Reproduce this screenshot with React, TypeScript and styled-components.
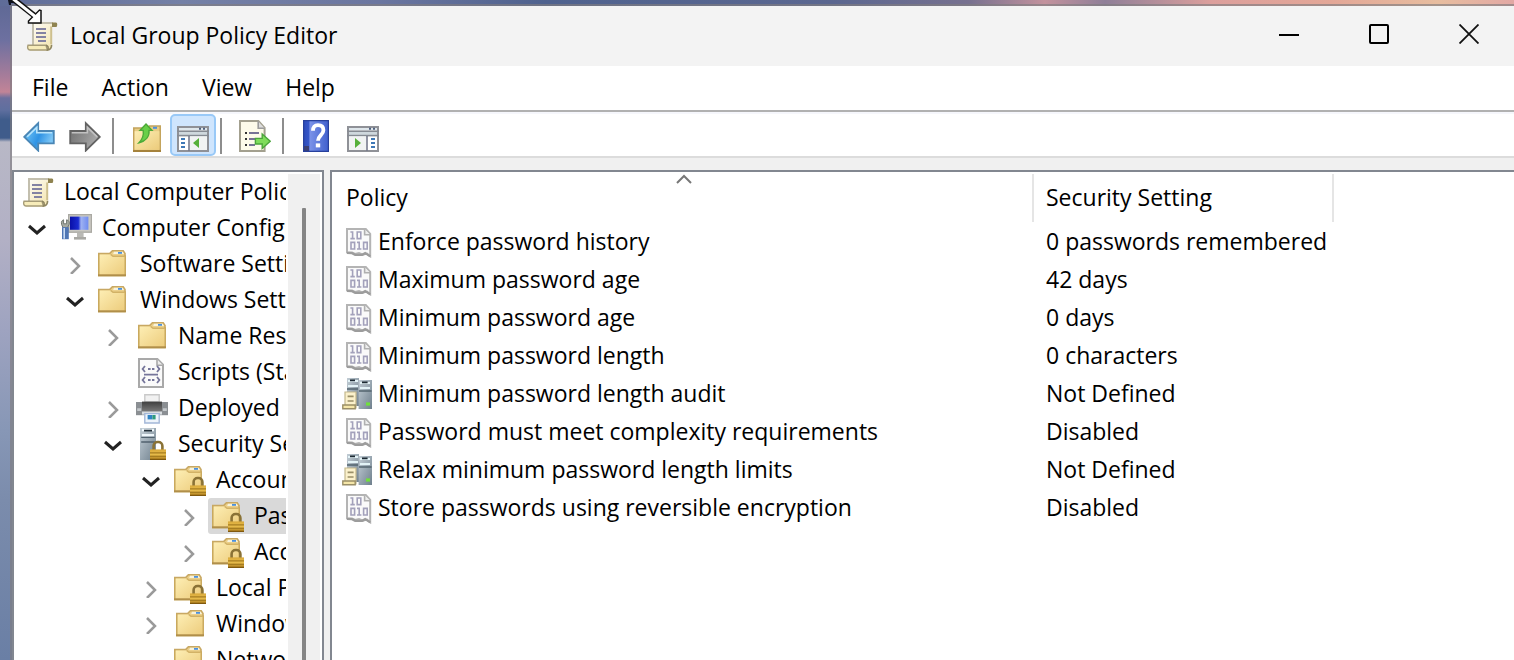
import React, { useState } from "react";
import styled, { createGlobalStyle } from "styled-components";

const GlobalStyle = createGlobalStyle`
  * { box-sizing: border-box; }
  body {
    margin: 0;
    font-family: "Open Sans", "Noto Sans", sans-serif;
    font-size: 23px;
    line-height: 32px;
    color: #000;
  }
  button {
    font: inherit;
    color: inherit;
    border: 0;
    background: transparent;
    padding: 0;
  }
  svg { display: block; flex: none; }
`;

/* ---------- layout ---------- */

const Desktop = styled.div`
  height: 100vh;
  min-height: 320px;
  padding: 4px 0 0 10px;
  overflow: hidden;
  display: flex;
  background:
    linear-gradient(90deg, #5f6c98 0, #7480a6 12%, #6b76a0 25%, #4f628e 36%, #5b6790 55%, #77718f 64%, #c3929d 69%, #8f7f98 73%, #dc9f9c 80%, #e3a797 88%, #e7bd9f 95%, #e2a8a4 100%) 0 0 / 100% 6px no-repeat,
    linear-gradient(180deg, #5d6894 0, #6d70a0 40px, #a57c9a 75px, #c28497 92px, #6c6f9e 98px, #5f6f9f 110px, #3f5c8b 120px, #3f5c8b 138px, #b8b8c6 142px, #b2b0c5 240px, #9ea3c0 330px, #8797b6 430px, #7b8cac 500px, #6a7fa5 660px);
`;

const Window = styled.div`
  flex: 1;
  min-width: 0;
  display: flex;
  flex-direction: column;
  border-style: solid;
  border-width: 2px 0 0 2px;
  border-color: rgba(128, 124, 128, 0.65);
  background: #f0f0f0;
  background-clip: padding-box;
`;

const TitleBar = styled.header`
  flex: none;
  height: 60px;
  display: flex;
  align-items: center;
  gap: 12px;
  padding-left: 14px;
  background: #f3f3f3;
`;

const Title = styled.h1`
  flex: 1;
  margin: 0;
  padding-bottom: 2px;
  font-size: 23px;
  font-weight: 400;
`;

const CaptionButtons = styled.div`
  display: flex;
  align-self: flex-start;
`;

const CaptionButton = styled.button`
  width: 90px;
  height: 56px;
  display: grid;
  place-items: center;
`;

const MenuBar = styled.nav`
  flex: none;
  height: 46px;
  display: flex;
  align-items: center;
  gap: 1px;
  padding: 0 4px 2px;
  background: #fff;
  border-bottom: 2px solid #b1b1b1;
`;

const MenuItem = styled.button`
  padding: 0 16px;
`;

const ToolBar = styled.div`
  flex: none;
  height: 46px;
  display: flex;
  align-items: stretch;
  padding-left: 4px;
  background: #fff;
  border-top: 2px solid #f6f7fc;
  border-bottom: 2px solid #dcdcdc;
`;

const ToolButton = styled.button<{ $active?: boolean }>`
  width: 46px;
  padding: 4px 5px 2px;
  border: 2px solid ${(p) => (p.$active ? "#99c9f7" : "transparent")};
  border-radius: 5px;
  background: ${(p) => (p.$active ? "#cfe5fd" : "transparent")};
`;

const ToolSeparator = styled.span`
  width: 2px;
  height: 36px;
  margin: 4px 10px 0 4px;
  background: #8d8d8d;
`;

const Panes = styled.main`
  flex: 1;
  min-height: 0;
  display: flex;
  gap: 6px;
  padding-top: 12px;
  background: #f0f0f0;
`;

const TreePane = styled.aside`
  flex: none;
  width: 312px;
  display: flex;
  padding: 2px 2px 0 0;
  background: #fff;
  border: 2px solid #828790;
  border-bottom: 0;
`;

const Tree = styled.ul`
  flex: 1;
  min-width: 0;
  margin: 0 2px 0 0;
  padding: 0;
  list-style: none;
  overflow: hidden;
`;

const TreeRow = styled.li<{ $level: number }>`
  height: 36px;
  display: flex;
  align-items: center;
  padding-left: ${(p) => (p.$level === 0 ? 0 : p.$level * 38 - 30)}px;
`;

const Toggle = styled.button`
  width: 30px;
  height: 36px;
  flex: none;
  display: grid;
  place-items: center;
`;

const ToggleSpace = styled.span`
  width: 30px;
  flex: none;
`;

const TreeLabel = styled.button<{ $selected?: boolean }>`
  flex: 1 0 auto;
  height: 36px;
  display: flex;
  align-items: center;
  gap: 10px;
  margin-left: 4px;
  padding-left: 4px;
  border-radius: 3px 0 0 3px;
  white-space: nowrap;
  text-align: left;
  background: ${(p) => (p.$selected ? "#d9d9d9" : "transparent")};
`;

const ItemText = styled.span`
  padding-bottom: 2px;
`;

const ScrollTrack = styled.div`
  flex: none;
  width: 32px;
  padding: 34px 0 0 14px;
  background: #f0f0f0;
`;

const ScrollThumb = styled.div`
  width: 4px;
  height: 100%;
  border-radius: 1px 1px 0 0;
  background: #858585;
`;

const ListPane = styled.section`
  flex: 1;
  min-width: 0;
  overflow: hidden;
  padding-top: 2px;
  background: #fff;
  border: solid #828790;
  border-width: 2px 0 0 2px;
`;

const Table = styled.table`
  width: 100%;
  table-layout: fixed;
  border-collapse: separate;
  border-spacing: 0;
`;

const HeadCell = styled.th<{ $width?: number }>`
  position: relative;
  width: ${(p) => (p.$width ? `${p.$width}px` : "auto")};
  height: 48px;
  padding: 0 0 2px ${(p) => (p.$width === 702 ? 14 : 12)}px;
  border-right: ${(p) => (p.$width ? "2px solid #e5e5e5" : "0")};
  font-weight: 400;
  text-align: left;
`;

const SortMark = styled.span`
  position: absolute;
  top: 0;
  left: 50%;
  margin-left: -6px;
`;

const Gap = styled.tr`
  height: 1px;
`;

const Cell = styled.td`
  height: 38px;
  padding: 0 0 0 12px;
  white-space: nowrap;
`;

const PolicyName = styled.div`
  display: flex;
  align-items: center;
  gap: 4px;
  margin-left: -2px;
`;

const PolicyValue = styled.div`
  padding-bottom: 2px;
`;

/* ---------- icons, drawn on a 16-unit grid ---------- */

const Icon = ({ children, size = 32 }: { children: React.ReactNode; size?: number }) => (
  <svg width={size} height={size} viewBox="0 0 16 16" aria-hidden="true">
    {children}
  </svg>
);

const GradientSheet = styled.svg`
  position: absolute;
`;

const Gradients = () => (
  <GradientSheet width="0" height="0" aria-hidden="true">
    <defs>
      <linearGradient id="gFolder" x1="0" y1="0" x2="1" y2="1">
        <stop offset="0" stopColor="#fdeeb4" />
        <stop offset="1" stopColor="#eccb7b" />
      </linearGradient>
      <linearGradient id="gPaper" x1="0" y1="0" x2="1" y2="1">
        <stop offset="0" stopColor="#ffffff" />
        <stop offset="1" stopColor="#f3e3a8" />
      </linearGradient>
      <linearGradient id="gBlue" x1="0" y1="0" x2="1" y2="0.4">
        <stop offset="0" stopColor="#7fd0fb" />
        <stop offset="0.6" stopColor="#2f93e4" />
        <stop offset="1" stopColor="#7cc6f6" />
      </linearGradient>
      <linearGradient id="gGray" x1="0" y1="0" x2="1" y2="0.4">
        <stop offset="0" stopColor="#6f6f6f" />
        <stop offset="0.6" stopColor="#8f8f8f" />
        <stop offset="1" stopColor="#a9a9a9" />
      </linearGradient>
      <linearGradient id="gHelp" x1="0" y1="0" x2="1" y2="0">
        <stop offset="0" stopColor="#2c49b8" />
        <stop offset="0.22" stopColor="#3556c8" />
        <stop offset="0.27" stopColor="#7a92e8" />
        <stop offset="1" stopColor="#3f5fcd" />
      </linearGradient>
      <linearGradient id="gServer" x1="0" y1="0" x2="1" y2="1">
        <stop offset="0" stopColor="#c3ced6" />
        <stop offset="1" stopColor="#6f808d" />
      </linearGradient>
      <linearGradient id="gScreen" x1="0" y1="0" x2="1" y2="0">
        <stop offset="0" stopColor="#0a10a8" />
        <stop offset="0.45" stopColor="#1a2bd0" />
        <stop offset="0.6" stopColor="#9fb2f2" />
        <stop offset="1" stopColor="#6f8cf0" />
      </linearGradient>
      <linearGradient id="gLock" x1="0" y1="0" x2="0" y2="1">
        <stop offset="0" stopColor="#d9a93a" />
        <stop offset="0.45" stopColor="#e9be4c" />
        <stop offset="1" stopColor="#a9781a" />
      </linearGradient>
      <linearGradient id="gPrinter" x1="0" y1="0" x2="0" y2="1">
        <stop offset="0" stopColor="#3f3f3f" />
        <stop offset="1" stopColor="#777777" />
      </linearGradient>
    </defs>
  </GradientSheet>
);

const ScrollIcon = () => (
  <Icon>
    <path d="M3.5 1.2h9.7c1 0 1.3.8 1.1 2h-1.5v9.3c0 1.6-.6 2.7-1.7 2.7H2c-1 0-1.3-1-.9-2.4h2z" fill="url(#gPaper)" />
    <path d="M3.5 13V1.5h10" fill="none" stroke="#c3bfae" />
    <path d="M12.6 3.2V12" stroke="#cdbf8e" />
    <path d="M13 1.2h2c.8.1.8 1.3.3 2.3H13z" fill="#8f8350" />
    <path d="M1 12.6h9l.7 2.4H2c-1 0-1.5-1-1-2.4z" fill="#f7ecb9" stroke="#a69c78" strokeWidth=".7" />
    <path d="M10 12.6c1 .2 1.4 1.2.8 2.4 1.4-.1 2-1 2-2.6" fill="none" stroke="#8e8560" strokeWidth=".8" />
    <path d="M5 4.5h5M5 6.5h5M5 8.5h5M6 10.5h4" stroke="#8483a3" strokeWidth=".9" />
  </Icon>
);

const Padlock = () => (
  <g>
    <path d="M9.8 11V9c0-1.2.9-2 2-2h.4c1.1 0 2 .8 2 2v2" fill="none" stroke="#8a7236" strokeWidth="1.3" />
    <path d="M8 10.7h8V16H8z" fill="url(#gLock)" />
    <path d="M8 12.4h8M8 14.2h8" stroke="#a67d20" strokeWidth=".6" />
    <path d="M8 15.7h8" stroke="#80590f" strokeWidth=".6" />
  </g>
);

const FolderIcon = ({ inset = 0, locked = false }: { inset?: number; locked?: boolean }) => (
  <Icon>
    <g transform={`translate(${inset} 1)`}>
      <path d="M.4 1.8h5.4L7.2.4h5.4l.9 1.4v11H.4z" fill="#ecd08a" stroke="#c8a863" strokeWidth=".8" />
      <path d="M8 .9h4.4l.6 1.1H7.6z" fill="#f8f3dc" />
      <path d="M10 1h2v.9h-2z" fill="#4b90dd" />
      <path d="M.6 2.3h5.8l1 .7h6.1v9.8H.6z" fill="url(#gFolder)" />
      <path d="M.4 12.8V2M13.6 2.6v10.2" stroke="#c9a95e" strokeWidth=".7" />
      <path d="M6.3 2.2l1.2.9h6" fill="none" stroke="#d2b266" strokeWidth=".7" />
      <path d="M0 12.6h14" stroke="#b08f4a" strokeWidth=".9" />
    </g>
    {locked && <Padlock />}
  </Icon>
);

const ComputerIcon = () => (
  <Icon>
    <path d="M4 1h12v9.4H4z" fill="#c9c8c2" />
    <path d="M4.3 1.3h11.4v8.8H4.3z" fill="none" stroke="#aaa9a3" strokeWidth=".6" />
    <path d="M5 2.3h9.2v6.6H5z" fill="url(#gScreen)" />
    <path d="M8.5 10.4h3.3v2.2H8.5z" fill="#b9b9b5" />
    <path d="M7 12.5h6v1.3H7z" fill="#a8a8a4" />
    <path d="M.8 6.3C.4 4.6 1.3 4 1.8 3.9v2h1.5v-2c1 .2 1.7 1.2 1.2 2.4L3.6 8h-2z" fill="#a5aaa2" stroke="#6f7770" strokeWidth=".5" />
    <path d="M1 7.6h3.4v6H1z" fill="#4f76b4" />
    <path d="M2.1 8v5.4" stroke="#c9dcf5" strokeWidth=".8" />
  </Icon>
);

const ScriptIcon = () => (
  <Icon>
    <path d="M1.5 1.5h9.2l2.8 2.8v11.2h-12z" fill="#fafafa" stroke="#a9a9a9" />
    <path d="M10.5 1.6v3h3" fill="#ececec" stroke="#a9a9a9" strokeWidth=".8" />
    <path d="M4.5 5L3.3 6.5 4.5 8M10.5 5l1.2 1.5L10.5 8M4.5 10.5L3.3 12l1.2 1.5M10.5 10.5l1.2 1.5-1.2 1.5M6 6.5h1.3M8 6.5h1.2M6 12h1.3M8 12h1.2M4 9.3h7" fill="none" stroke="#75759a" strokeWidth=".9" />
  </Icon>
);

const PrinterIcon = () => (
  <Icon>
    <path d="M4.4 1.4h7.2V5H4.4z" fill="#f1f1f1" stroke="#c9c9c9" strokeWidth=".7" />
    <path d="M0 5h16v6.6H0z" fill="#8b8f93" />
    <path d="M3 4.8h10v4.7H3z" fill="url(#gPrinter)" />
    <path d="M.6 8.8h2M13.4 8.8h2" stroke="#c4c8cb" strokeWidth="1.4" />
    <path d="M3 9.8h10v1.5H3z" fill="#d8dcdf" />
    <path d="M4.4 10.8h7.2v4.7H4.4z" fill="#eef4fb" stroke="#a3b7d8" strokeWidth=".7" />
    <path d="M5.8 11.5h2.4v2.2H5.8z" fill="#2f83c4" />
    <path d="M8.2 11.5h1.6v2.2H8.2z" fill="#2f9b7d" />
  </Icon>
);

const ServerLockIcon = () => (
  <Icon>
    <path d="M2 0h8v16H2z" fill="url(#gServer)" />
    <path d="M3 1h6M3 3.6h6" stroke="#eef6fb" strokeWidth="1.3" />
    <path d="M4 1.3h4" stroke="#23303a" strokeWidth=".9" />
    <path d="M2.6 4.7h6.8M2.6 7h6.8" stroke="#51626f" strokeWidth=".7" />
    <g transform="translate(-1 0)"><Padlock /></g>
  </Icon>
);

const BackIcon = () => (
  <Icon>
    <path d="M.6 8.5L7.6 1.6v3.9h7.8v6.2H7.6v3.6z" fill="url(#gBlue)" stroke="#4a86b5" strokeWidth=".9" />
    <path d="M2.1 8.4L6.9 3.7v2.7h7.6" fill="none" stroke="#b7e4fb" strokeWidth=".8" />
  </Icon>
);

const ForwardIcon = () => (
  <Icon>
    <path d="M15.4 8.5L8.4 1.6v3.9H.6v6.2h7.8v3.6z" fill="url(#gGray)" stroke="#626262" strokeWidth=".9" />
    <path d="M1.4 6.4h7.8V3.7l4.9 4.7" fill="none" stroke="#c2c2c2" strokeWidth=".8" />
  </Icon>
);

const UpFolderIcon = () => (
  <Icon>
    <path d="M1.4 4h7l.8-1h5.4v12.5H1.4z" fill="#e9cc84" stroke="#c4a45c" strokeWidth=".8" />
    <path d="M11 3.4h2v1h-2z" fill="#4b90dd" />
    <path d="M1.8 5.6h12.4v9.2H1.8z" fill="url(#gFolder)" />
    <path d="M1 15.5h14" stroke="#a5823c" />
    <path d="M7.5 2l3 3.2H9c.3 3.1-1.7 5.4-5 6.2 1.9-2 2.5-3.7 2.1-6.2H4.5z" fill="#69cf48" stroke="#4caa38" strokeWidth=".7" />
  </Icon>
);

const PaneIcon = ({ mirrored = false }: { mirrored?: boolean }) => (
  <Icon>
    <path d="M.5 3.5h15v12H.5z" fill="#fff" stroke="#8f9197" />
    <path d="M1 4h14v1H1z" fill="#dfe7ec" />
    <path d="M11 4.4h1M13 4.4h1" stroke="#4f607e" />
    <path d="M0 5.6h16" stroke="#868b93" strokeWidth=".8" />
    <path d="M1 6h14v1.5H1z" fill="#cfd8dd" />
    <path d="M0 7.8h16" stroke="#868b93" strokeWidth=".8" />
    {mirrored ? (
      <g>
        <path d="M1 8.2h8.6V15H1z" fill="#f1f3f3" />
        <path d="M10 8v7.5" stroke="#75798c" strokeWidth=".8" />
        <path d="M12 9.5h2M12 11.5h2M12 13.5h2" stroke="#3f78b6" />
        <path d="M4 9v5l3-2.5z" fill="#56b03a" />
      </g>
    ) : (
      <g>
        <path d="M6.4 8.2H15V15H6.4z" fill="#f1f3f3" />
        <path d="M6 8v7.5" stroke="#75798c" strokeWidth=".8" />
        <path d="M2 9.5h2M2 11.5h2M2 13.5h2" stroke="#3f78b6" />
        <path d="M11 9v5l-3-2.5z" fill="#56b03a" />
      </g>
    )}
  </Icon>
);

const ExportIcon = () => (
  <Icon>
    <path d="M.5.5h9.2l3.1 3.4v11.6H.5z" fill="#fdfbea" stroke="#a3a08f" />
    <path d="M9.6.6v3.5h3.2" fill="#ddd" stroke="#9c9c9c" strokeWidth=".8" />
    <path d="M3 6.5h1M3 9.5h1M3 12.5h1" stroke="#333" />
    <path d="M5 6.5h5M5 9.5h3M5 12.5h3" stroke="#777395" />
    <path d="M8.2 9.2h3.4V7l4 3.6-4 3.6V12H8.2z" fill="#7fdc5b" stroke="#4aa53a" strokeWidth=".7" />
  </Icon>
);

const HelpIcon = () => (
  <Icon>
    <path d="M1 0h13v16H1z" fill="url(#gHelp)" />
    <path d="M1 13h3v3H1z" fill="#3b3f72" />
    <path d="M1.3.3h12.4v15.4H1.3z" fill="none" stroke="#27409c" strokeWidth=".6" />
    <path d="M6 5.4c0-1.9.9-2.8 2.5-2.8 1.7 0 2.7.9 2.7 2.5 0 2.4-2.7 2.5-2.7 5.3" fill="none" stroke="#fff" strokeWidth="1.9" />
    <path d="M7.4 11.7h2.2v2H7.4z" fill="#fff" />
  </Icon>
);

const BinaryIcon = () => (
  <Icon>
    <g transform="translate(1 0)">
      <path d="M1.5 1.5h9.4l2.2 2.4v11.2l-1.6-1.3-2 .5-2-.8-2 .5-1.5-.8-2.5-.1z" fill="#fafafa" stroke="#b4b4b4" />
      <path d="M1.5 13.4l2.5.2 1.6.8h3.5l1.5-.9 2.5 1.7" fill="none" stroke="#9c9c9c" strokeWidth="1.1" />
      <path d="M10.3 1.6v2.8h2.8" fill="#eee" stroke="#b0b0b0" strokeWidth=".8" />
      <path d="M3.2 3h1.1v3.3M3.2 6.3h2.2M6.6 3h1.8v3.3H6.600zM3.5 8.2h1.8v3.3H3.5zM6.5 8.2h1.100v3.3M6.5 11.5h2.200M9.8 8.2h1.800v3.300H9.800z" fill="none" stroke="#a3a1bb" strokeWidth=".8" />
    </g>
  </Icon>
);

const ServersIcon = () => (
  <Icon>
    <g transform="translate(1 0)">
      <path d="M1.5 0h6v14h-6z" fill="url(#gServer)" />
      <path d="M7.3 1H14v14.5H7.3z" fill="url(#gServer)" />
      <path d="M2 1.5h5M2 4h5M8 2.5h5M8 5h5" stroke="#e3f3f7" strokeWidth="1.1" />
      <path d="M3 1.2h2.5M9 2.2h2.8" stroke="#1d2a33" strokeWidth=".8" />
      <path d="M1.5 5.5h5.5M7.5 6.5h6.3" stroke="#53646f" strokeWidth=".7" />
      <path d="M11 12.2h2v1.6h-2z" fill="#6fe03c" />
    </g>
    <path d="M1.5 7h5.5v8H1.5z" fill="#fbf1cb" stroke="#c4b88e" strokeWidth=".6" />
    <path d="M.4 13.5h6.2v1.9H.4z" fill="#f5e6a8" stroke="#9a8e66" strokeWidth=".7" />
    <path d="M2.8 9.2h3M2.8 11.5h3" stroke="#9a8f68" strokeWidth=".8" />
  </Icon>
);

const Chevron = ({ open }: { open: boolean }) => (
  <svg width="20" height="20" viewBox="0 0 20 20" fill="none" aria-hidden="true">
    {open ? (
      <path d="M2 8l8 7 8-7" stroke="#222" strokeWidth="3" />
    ) : (
      <path d="M6 5l8 8-8 8" transform="translate(0 -1)" stroke="#9a9a9a" strokeWidth="2.5" />
    )}
  </svg>
);

const ResizePointer = styled.svg`
  position: absolute;
  top: 0;
  left: 6px;
`;

/* ---------- data ---------- */

type TreeNode = { level: number; label: string; icon: React.ReactNode; open?: boolean };

const tree: TreeNode[] = [
  { level: 0, label: "Local Computer Policy", icon: <ScrollIcon /> },
  { level: 1, label: "Computer Configuration", icon: <ComputerIcon />, open: true },
  { level: 2, label: "Software Settings", icon: <FolderIcon />, open: false },
  { level: 2, label: "Windows Settings", icon: <FolderIcon />, open: true },
  { level: 3, label: "Name Resolution Policy", icon: <FolderIcon inset={1} />, open: false },
  { level: 3, label: "Scripts (Startup/Shutdown)", icon: <ScriptIcon /> },
  { level: 3, label: "Deployed Printers", icon: <PrinterIcon />, open: false },
  { level: 3, label: "Security Settings", icon: <ServerLockIcon />, open: true },
  { level: 4, label: "Account Policies", icon: <FolderIcon locked />, open: true },
  { level: 5, label: "Password Policy", icon: <FolderIcon locked />, open: false },
  { level: 5, label: "Account Lockout Policy", icon: <FolderIcon locked />, open: false },
  { level: 4, label: "Local Policies", icon: <FolderIcon locked />, open: false },
  { level: 4, label: "Windows Defender Firewall", icon: <FolderIcon inset={1} />, open: false },
  { level: 4, label: "Network List Manager", icon: <FolderIcon /> },
];

const policies = [
  { name: "Enforce password history", value: "0 passwords remembered" },
  { name: "Maximum password age", value: "42 days" },
  { name: "Minimum password age", value: "0 days" },
  { name: "Minimum password length", value: "0 characters" },
  { name: "Minimum password length audit", value: "Not Defined", servers: true },
  { name: "Password must meet complexity requirements", value: "Disabled" },
  { name: "Relax minimum password length limits", value: "Not Defined", servers: true },
  { name: "Store passwords using reversible encryption", value: "Disabled" },
];

export default function App() {
  const [selected, setSelected] = useState("Password Policy");

  return (
    <Desktop>
      <GlobalStyle />
      <Gradients />
      <Window>
        <TitleBar>
          <ScrollIcon />
          <Title>Local Group Policy Editor</Title>
          <CaptionButtons>
            <CaptionButton aria-label="Minimize">
              <svg width="20" height="20" viewBox="0 0 20 20"><path d="M0 11h20" stroke="#000" strokeWidth="2" /></svg>
            </CaptionButton>
            <CaptionButton aria-label="Maximize">
              <svg width="20" height="20" viewBox="0 0 20 20"><rect x="1" y="1" width="18" height="18" rx="1" fill="none" stroke="#000" strokeWidth="2" /></svg>
            </CaptionButton>
            <CaptionButton aria-label="Close">
              <svg width="20" height="20" viewBox="0 0 20 20"><path d="M.5.5l19 19M19.5.5l-19 19" stroke="#111" strokeWidth="1.8" /></svg>
            </CaptionButton>
          </CaptionButtons>
        </TitleBar>

        <MenuBar aria-label="Menu">
          {["File", "Action", "View", "Help"].map((item) => (
            <MenuItem key={item}>{item}</MenuItem>
          ))}
        </MenuBar>

        <ToolBar role="toolbar" aria-label="Tools">
          <ToolButton aria-label="Back"><BackIcon /></ToolButton>
          <ToolButton aria-label="Forward"><ForwardIcon /></ToolButton>
          <ToolSeparator />
          <ToolButton aria-label="Up one level"><UpFolderIcon /></ToolButton>
          <ToolButton $active aria-pressed="true" aria-label="Show or hide console tree"><PaneIcon /></ToolButton>
          <ToolSeparator />
          <ToolButton aria-label="Export list"><ExportIcon /></ToolButton>
          <ToolSeparator />
          <ToolButton aria-label="Help"><HelpIcon /></ToolButton>
          <ToolButton aria-label="Show or hide action pane"><PaneIcon mirrored /></ToolButton>
        </ToolBar>

        <Panes>
          <TreePane>
            <Tree>
              {tree.map((node) => (
                <TreeRow key={node.label} $level={node.level}>
                  {node.open !== undefined ? (
                    <Toggle aria-label={`Toggle ${node.label}`} aria-expanded={node.open}>
                      <Chevron open={node.open} />
                    </Toggle>
                  ) : (
                    node.level > 0 && <ToggleSpace />
                  )}
                  <TreeLabel $selected={selected === node.label} onClick={() => setSelected(node.label)}>
                    {node.icon}
                    <ItemText>{node.label}</ItemText>
                  </TreeLabel>
                </TreeRow>
              ))}
            </Tree>
            <ScrollTrack><ScrollThumb /></ScrollTrack>
          </TreePane>

          <ListPane>
            <Table>
              <thead>
                <tr>
                  <HeadCell $width={702} aria-sort="ascending">
                    Policy
                    <SortMark>
                      <svg width="16" height="10" viewBox="0 0 16 10" fill="none" aria-hidden="true">
                        <path d="M1 9l7-7 7 7" stroke="#777" strokeWidth="2" />
                      </svg>
                    </SortMark>
                  </HeadCell>
                  <HeadCell $width={300}>Security Setting</HeadCell>
                  <HeadCell as="td" />
                </tr>
              </thead>
              <tbody>
                <Gap />
                {policies.map((policy) => (
                  <tr key={policy.name}>
                    <Cell>
                      <PolicyName>
                        {policy.servers ? <ServersIcon /> : <BinaryIcon />}
                        <ItemText>{policy.name}</ItemText>
                      </PolicyName>
                    </Cell>
                    <Cell><PolicyValue>{policy.value}</PolicyValue></Cell>
                    <Cell />
                  </tr>
                ))}
              </tbody>
            </Table>
          </ListPane>
        </Panes>
      </Window>
      <ResizePointer width="38" height="26" viewBox="0 0 38 26" aria-hidden="true">
        <path d="M2 0h6v3H5v2H3z" fill="#10131f" />
        <path d="M6-2l24 19" stroke="#111" strokeWidth="6" />
        <path d="M35 10.5V23H22.5v-2l11-11z" fill="#fff" stroke="#111" strokeWidth="1.5" />
        <path d="M6-2l25 20" stroke="#fff" strokeWidth="3" />
      </ResizePointer>
    </Desktop>
  );
}
